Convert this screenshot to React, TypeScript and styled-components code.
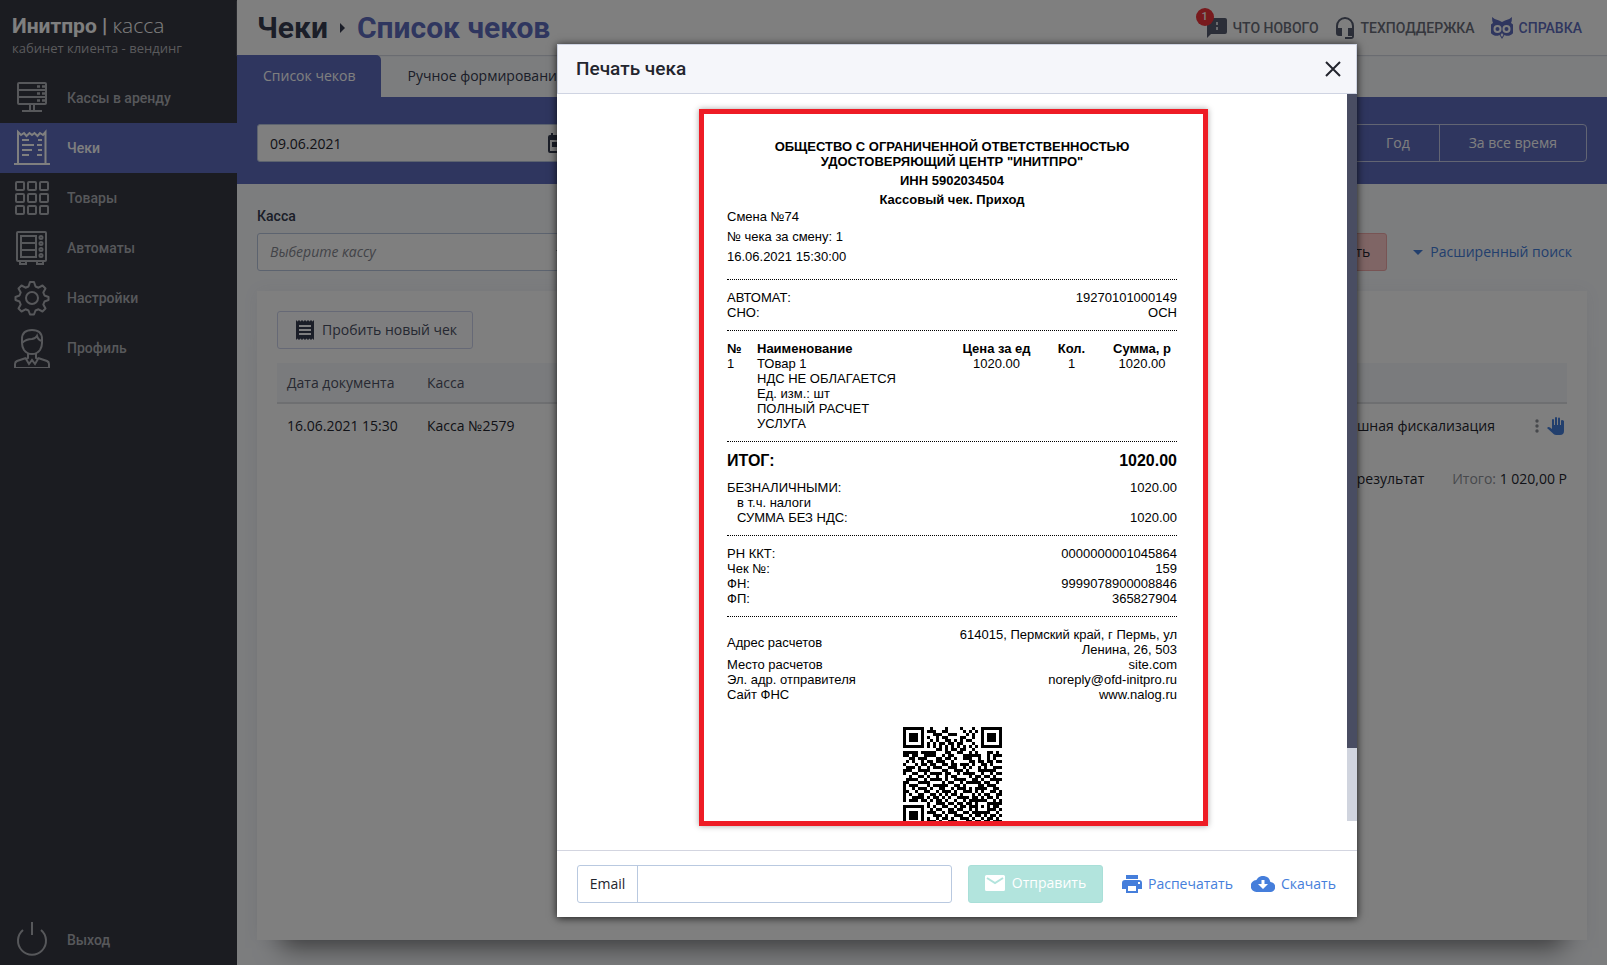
import React from "react";
import styled, { createGlobalStyle, css } from "styled-components";

const GlobalStyle = createGlobalStyle`
  *, *::before, *::after { box-sizing: border-box; }
  body { margin: 0; background: #fff; font-family: "Open Sans", "Noto Sans", sans-serif; font-size: 14px; line-height: 20px; color: #23252e; }
  button, input, select { font: inherit; color: inherit; margin: 0; }
  button { cursor: pointer; }
  a { color: inherit; text-decoration: none; }
  svg { display: block; flex: none; }
  h1, h2, p { margin: 0; }
  table { border-collapse: collapse; border-spacing: 0; }
`;

/* ---------- shell ---------- */

const Page = styled.div`
  min-height: 100vh;
  padding: 0 4px 5px 0;
  display: flex;
`;

const Shell = styled.div`
  position: relative;
  flex: 1;
  min-width: 0;
  display: flex;
  background: #f8fafd;
  overflow: hidden;
`;

const Sidebar = styled.aside`
  flex: none;
  width: 237px;
  background: #363842;
  color: #fff;
  display: flex;
  flex-direction: column;
`;

const Brand = styled.div`
  height: 73px;
  padding: 13px 12px 0;
`;

const BrandName = styled.div`
  font: 700 21px/24px Roboto, sans-serif;
  white-space: nowrap;
  span { font-family: "Open Sans", sans-serif; font-weight: 300; }
`;

const BrandNote = styled.div`
  font-size: 13px;
  line-height: 20px;
  color: #b4b5b9;
`;

const Nav = styled.nav`
  flex: 1;
  display: flex;
  flex-direction: column;
`;

const NavLink = styled.a<{ $active?: boolean; $last?: boolean }>`
  height: 50px;
  padding-left: 14px;
  display: flex;
  align-items: center;
  gap: 17px;
  font: 500 14px/20px Roboto, sans-serif;
  color: ${(p) => (p.$active ? "#fff" : "#aeb0b6")};
  background: ${(p) => (p.$active ? "#5e6cbe" : "transparent")};
  ${(p) => p.$last && css`margin-top: auto;`}
`;

const Main = styled.main`
  flex: 1;
  min-width: 0;
  display: flex;
  flex-direction: column;
`;

const Header = styled.header`
  height: 55px;
  padding: 0 25px 0 20px;
  background: #fff;
  box-shadow: 0 1px 1px #d5d9e2;
  display: flex;
  align-items: center;
  justify-content: space-between;
`;

const Crumbs = styled.h1`
  display: flex;
  align-items: center;
  gap: 11px;
  font: 700 30px/36px Roboto, sans-serif;
  color: #363c50;
  a { color: #5e6cbe; }
`;

const HelpLinks = styled.div`
  display: flex;
  align-items: center;
  gap: 16px;
`;

const HelpLink = styled.a<{ $accent?: boolean }>`
  position: relative;
  display: flex;
  align-items: center;
  gap: 6px;
  font: 500 14px/20px Roboto, sans-serif;
  color: ${(p) => (p.$accent ? "#5e6cbe" : "#6b6e7a")};
`;

const Badge = styled.span`
  position: absolute;
  left: -11px;
  top: -10px;
  width: 18px;
  height: 18px;
  border-radius: 9px;
  background: #f0343a;
  color: #fff;
  font: 500 11px/18px Roboto, sans-serif;
  text-align: center;
`;

const Tabs = styled.div`
  height: 42px;
  display: flex;
`;

const Tab = styled.button<{ $active?: boolean }>`
  border: 0;
  padding: 0 26px;
  background: ${(p) => (p.$active ? "#5e6cbe" : "transparent")};
  color: ${(p) => (p.$active ? "#fff" : "#363c50")};
  border-radius: 0 5px 0 0;
  white-space: nowrap;
`;

const PeriodBar = styled.div`
  padding: 27px 20px 22px;
  background: #5e6cbe;
  display: flex;
  justify-content: space-between;
`;

const FieldBox = styled.div`
  width: 320px;
  height: 38px;
  padding: 0 10px 0 12px;
  background: #fff;
  border: 1px solid #b9c6de;
  border-radius: 3px;
  display: flex;
  align-items: center;
  input, select {
    flex: 1;
    min-width: 0;
    height: 36px;
    border: 0;
    padding: 0;
    background: transparent;
    outline: 0;
  }
  select { appearance: none; font-style: italic; color: #858790; }
`;

const Segments = styled.div`
  display: flex;
  border: 1px solid #c5cae6;
  border-radius: 4px;
  color: #fff;
`;

const Segment = styled.button`
  height: 36px;
  padding: 0 29px;
  border: 0;
  border-left: 1px solid #c5cae6;
  background: transparent;
  &:first-child { border-left: 0; }
`;

const Filters = styled.div`
  padding: 22px 20px 20px;
  display: flex;
  align-items: flex-end;
  justify-content: space-between;
  label { display: block; font: 500 14px/20px Roboto, sans-serif; margin-bottom: 7px; color: #363c50; }
`;

const FilterActions = styled.div`
  display: flex;
  align-items: center;
  gap: 26px;
  padding-right: 15px;
`;

const ClearButton = styled.button`
  height: 38px;
  padding: 0 16px;
  border: 1px solid #f0a9a9;
  border-radius: 3px;
  background: #ffcbcb;
`;

const AdvancedLink = styled.a`
  display: flex;
  align-items: center;
  gap: 7px;
  color: #457edb;
`;

const Card = styled.section`
  flex: 1;
  margin: 0 20px 25px;
  padding: 20px;
  background: #fff;
  box-shadow: 0 0 16px rgba(60, 70, 110, 0.06), 0 32px 24px -24px rgba(0, 0, 0, 0.5);
`;

const NewButton = styled.button`
  height: 38px;
  padding: 0 15px 0 18px;
  display: flex;
  align-items: center;
  gap: 8px;
  border: 1px solid #cdd3ec;
  border-radius: 3px;
  background: #fdfdff;
  color: #4b5063;
`;

const ListTable = styled.table`
  width: 100%;
  margin-top: 14px;
  table-layout: fixed;
  th, td { padding: 0 10px; text-align: left; font-weight: 400; white-space: nowrap; }
  th { height: 40px; background: #f5f7fb; color: #4f5264; border-bottom: 2px solid #dcdee2; }
  td { height: 45px; }
  th:nth-child(1), th:nth-child(2) { width: 140px; }
  th:nth-child(4) { width: 190px; }
  th:nth-child(5) { width: 62px; }
  td:last-child { padding: 0 2px 0 30px; }
`;

const RowActions = styled.div`
  display: flex;
  align-items: center;
  justify-content: flex-end;
  gap: 8px;
`;

const Totals = styled.div`
  margin-top: 21px;
  display: flex;
  justify-content: flex-end;
  gap: 28px;
  span { color: #8f9299; }
`;

/* ---------- dialog ---------- */

const Overlay = styled.div`
  position: absolute;
  inset: 0;
  padding: 44px 250px 48px 0;
  background: rgba(0, 0, 0, 0.5);
  display: flex;
  justify-content: flex-end;
`;

const Dialog = styled.section`
  width: 800px;
  background: #fff;
  border: 0;
  box-shadow: 0 1px 8px rgba(0, 0, 0, 0.8);
  display: flex;
  flex-direction: column;
`;

const DialogHead = styled.header`
  height: 50px;
  padding: 0 15px 0 18px;
  background: #f5f6fa;
  border: 1px solid #cfd4e2;
  display: flex;
  align-items: center;
  justify-content: space-between;
  h2 { font: 500 19px/24px Roboto, sans-serif; color: #23252e; }
`;

const CloseButton = styled.button`
  padding: 0;
  border: 0;
  background: transparent;
`;

const DialogBody = styled.div`
  flex: 1;
  min-height: 0;
  display: flex;
`;

const ScrollArea = styled.div`
  flex: 1;
  padding: 15px 0 24px 3px;
  display: flex;
  justify-content: center;
`;

const ScrollTrack = styled.div`
  width: 10px;
  margin-bottom: 29px;
  background: #d0d4de;
`;

const ScrollThumb = styled.div`
  height: 90%;
  background: #494d62;
`;

const DialogFoot = styled.footer`
  height: 67px;
  padding: 0 20px;
  border-top: 1px solid #d3d5e0;
  display: flex;
  align-items: center;
  white-space: nowrap;
`;

const EmailGroup = styled.div`
  flex: none;
  width: 375px;
  height: 38px;
  border: 1px solid #b9c9e0;
  border-radius: 3px;
  display: flex;
  label { width: 60px; border-right: 1px solid #b9c9e0; line-height: 36px; text-align: center; }
  input { flex: 1; min-width: 0; border: 0; padding: 0 12px; background: transparent; outline: 0; }
`;

const SendButton = styled.button`
  flex: none;
  width: 135px;
  height: 38px;
  margin: 0 19px 0 16px;
  padding: 0 0 2px;
  border: 1px solid #a9dfd8;
  border-radius: 3px;
  background: #b2e4dd;
  color: #fff;
  display: flex;
  align-items: center;
  justify-content: center;
  gap: 7px;
`;

const FootLink = styled.a`
  display: flex;
  align-items: center;
  gap: 6px;
  margin-right: 18px;
  color: #457edb;
  &:last-child { margin-right: 0; }
`;

/* ---------- receipt ---------- */

const Paper = styled.article`
  width: 509px;
  padding: 25px 26px 0 23px;
  border: 5px solid #ee1c25;
  box-shadow: 0 0 6px rgba(0, 0, 0, 0.35);
  background: #fff;
  overflow: hidden;
  color: #000;
  font: 13px/15px "Liberation Sans", Arial, sans-serif;
`;

const Seller = styled.div`
  text-align: center;
  font-weight: 700;
  display: flex;
  flex-direction: column;
  gap: 4px;
  margin-bottom: 2px;
`;

const Shift = styled.div`
  display: flex;
  flex-direction: column;
  gap: 5px;
  margin-bottom: 15px;
`;

const Rule = styled.div`
  margin: 10px 0;
  border-top: 1px dotted #000;
`;

const Pairs = styled.table`
  width: 100%;
  th { padding: 0; font-weight: 400; text-align: left; }
  td { padding: 0; text-align: right; }
`;

const IndentedHead = styled.th`
  && { padding-left: 10px; }
`;

const Address = styled.span`
  display: inline-block;
  width: 220px;
  vertical-align: top;
`;

const Items = styled.table`
  width: 100%;
  table-layout: fixed;
  th, td { padding: 0; text-align: center; vertical-align: top; }
  th:nth-child(1) { width: 30px; }
  th:nth-child(3) { width: 79px; }
  th:nth-child(4) { width: 71px; }
  th:nth-child(5) { width: 70px; }
  th:nth-child(-n + 2), td:nth-child(-n + 2) { text-align: left; }
`;

const Total = styled.div`
  margin-bottom: 10px;
  display: flex;
  justify-content: space-between;
  font-size: 16px;
  line-height: 18px;
  font-weight: 700;
`;

const Code = styled.div`
  margin-top: 25px;
  display: flex;
  justify-content: center;
`;

/* ---------- drawings ---------- */

const Line = ({ children }: { children: React.ReactNode }) => (
  <svg width="36" height="40" viewBox="0 0 36 40" fill="none" stroke="currentColor" strokeWidth="2">
    {children}
  </svg>
);

const RackIcon = () => (
  <Line>
    <rect x="4" y="5" width="28" height="21" rx="1" />
    <path d="M4 12h28M4 19h28M16 26v7M20 26v7M8 33h20" />
    <path d="M23 8.500h3M28 8.500h3M23 15.500h3M28 15.500h3M23 22.500h3M28 22.500h3" strokeWidth="2.500" />
  </Line>
);
const ReceiptIcon = () => (
  <Line>
    <path d="M0 36h36M4 36V4l3 3 3-2 2.500 3 3-3 2.500 2 2.500-2 3 3 2.500-3 3 2 2.500-3v32" />
    <path d="M8 12h7M8 17h12M8 22h10M8 27h7M24 12h4M23 17h5M24 22h4M23 27h5" />
  </Line>
);
const GridIcon = () => (
  <Line>
    {[3, 15, 27].map((y) =>
      [2, 14, 26].map((x) => <rect key={`${x}-${y}`} x={x} y={y + 1} width="8" height="8" rx="1" />)
    )}
  </Line>
);
const VendingIcon = () => (
  <Line>
    <rect x="3" y="4" width="29" height="29" rx="1" />
    <path d="M7 8h15v21H7zM7 15h15M7 22h15M6 33v3h6v-3M23 33v3h6v-3" />
    {[9.5, 15.5, 21.5, 27.5].map((y) => <circle key={y} cx="27" cy={y} r="1.500" />)}
  </Line>
);
const GearIcon = () => (
  <Line>
    <circle cx="18" cy="20" r="6" />
    <path strokeLinejoin="round" d="M16 4h4l1.500 4.500 3 1.200 4-2.200 3 3-2.200 4 1.200 3 4 1.500v3l-4 1.500-1.200 3 2.200 4-3 3-4-2.200-3 1.200-1.500 4h-4l-1.500-4-3-1.200-4 2.200-3-3 2.200-4-1.200-3-4-1.500v-3l4-1.500 1.200-3-2.200-4 3-3 4 2.200 3-1.200z" />
  </Line>
);
const PersonIcon = () => (
  <Line>
    <path d="M8 11q0-9 10-9t10 9v4q0 4-2 7-3 4-8 4t-8-4q-2-3-2-7zM8 15q4-4 10-4 4-1 5-3 1 4 5 5" />
    <path d="M14 25v5l-2 1 3 5 3-4 3 4 3-5-2-1v-5M12 30l-9 3q-2 1-2 3v4h34v-4q0-2-2-3l-9-3" />
  </Line>
);
const PowerIcon = () => (
  <Line>
    <path d="M18 2v13M9 10a14 14 0 1 0 18 0" />
  </Line>
);

const FeedbackIcon = () => (
  <svg width="20" height="20" viewBox="0 0 20 20" fill="#565d70">
    <path d="M2 0h16a2 2 0 0 1 2 2v12a2 2 0 0 1-2 2H4l-4 4V2a2 2 0 0 1 2-2z" />
    <path d="M9 4h2v3H9zM9 9h2v3H9z" fill="#d4d6dd" />
  </svg>
);
const HeadsetIcon = () => (
  <svg width="20" height="22" viewBox="0 0 20 22" fill="#565d70">
    <path d="M10 0a9 9 0 0 0-9 9v7a3 3 0 0 0 3 3h3v-8H3V9a7 7 0 0 1 14 0v2h-4v8h4v1h-7v2h6a3 3 0 0 0 3-3V9a9 9 0 0 0-9-9z" />
  </svg>
);
const OwlIcon = () => (
  <svg width="22" height="22" viewBox="0 0 22 22" fill="#5e6cbe">
    <path d="M1 0q3 3 7 3.500l3 1.500 3-1.500Q18 3 21 0q0 4-1 6a6 6 0 0 1-6.500 12L11 22l-2.500-4A6 6 0 0 1 2 6Q1 4 1 0z" />
    <circle cx="6.500" cy="12" r="4" fill="#fff" />
    <circle cx="15.500" cy="12" r="4" fill="#fff" />
    <circle cx="6.500" cy="12" r="2" />
    <circle cx="15.500" cy="12" r="2" />
    <path d="M11 16l1.500 2-1.500 2-1.500-2z" fill="#fff" />
  </svg>
);
const Caret = ({ color }: { color: string }) => (
  <svg width="10" height="5" viewBox="0 0 10 5" fill={color}><path d="M0 0h10L5 5z" /></svg>
);
const CrumbArrow = () => (
  <svg width="7" height="10" viewBox="0 0 7 10" fill="#363c50"><path d="M1 0l5 5-5 5z" /></svg>
);
const CalendarIcon = () => (
  <svg width="18" height="20" viewBox="0 0 18 20" fill="#363c50">
    <path fillRule="evenodd" d="M3 0h2v2h8V0h2v2h1a2 2 0 0 1 2 2v14a2 2 0 0 1-2 2H2a2 2 0 0 1-2-2V4a2 2 0 0 1 2-2h1zM2 7v11h14V7zM4 9h5v5H4z" />
  </svg>
);
const SlipIcon = () => (
  <svg width="18" height="20" viewBox="0 0 18 20" fill="#363c50">
    <path fillRule="evenodd" d="M0 0l1.500 1.500L3 0l1.500 1.500L6 0l1.500 1.500L9 0l1.500 1.500L12 0l1.500 1.500L15 0l1.500 1.500L18 0v20l-1.500-1.500L15 20l-1.500-1.500L12 20l-1.500-1.500L9 20l-1.500-1.500L6 20l-1.500-1.500L3 20l-1.500-1.500L0 20zM3 5v2h12V5zM3 9v2h12V9zM3 13v2h12v-2z" />
  </svg>
);
const DotsIcon = () => (
  <svg width="4" height="14" viewBox="0 0 4 14" fill="#8f9299">
    <circle cx="2" cy="2" r="1.700" /><circle cx="2" cy="7" r="1.700" /><circle cx="2" cy="12" r="1.700" />
  </svg>
);
const HandIcon = () => (
  <svg width="18" height="18" viewBox="0 0 18 18" fill="#457edb">
    <path d="M17 4v10a4 4 0 0 1-4 4H9q-2 0-3.500-2L0 11q1.500-1.500 3-.5L5 12V3q0-1 1-1t1 1v5h1V1q0-1 1-1t1 1v7h1V1.500q0-1 1-1t1 1V8h1V4q0-1 1-1t2 1z" />
  </svg>
);
const CrossIcon = () => (
  <svg width="16" height="16" viewBox="0 0 16 16" stroke="#23252e" strokeWidth="2"><path d="M1 1l14 14M15 1L1 15" /></svg>
);
const MailIcon = () => (
  <svg width="20" height="16" viewBox="0 0 20 16" fill="#fff">
    <path d="M1.500 0h17A1.500 1.500 0 0 1 20 1.500v13a1.500 1.500 0 0 1-1.500 1.500h-17A1.500 1.500 0 0 1 0 14.500v-13A1.500 1.500 0 0 1 1.500 0z" />
    <path d="M2 3l8 5 8-5" fill="none" stroke="#b2e4dd" strokeWidth="2" />
  </svg>
);
const PrinterIcon = () => (
  <svg width="20" height="18" viewBox="0 0 20 18" fill="#457edb">
    <path fillRule="evenodd" d="M4 0h12v4H4zM3 5h14a3 3 0 0 1 3 3v6h-4v4H4v-4H0V8a3 3 0 0 1 3-3zM6 11v5h8v-5zM16 7v2h2V7z" />
  </svg>
);
const CloudIcon = () => (
  <svg width="24" height="16" viewBox="0 0 24 16" fill="#457edb">
    <path fillRule="evenodd" d="M19.400 6A7.500 7.500 0 0 0 5.400 4 6 6 0 0 0 6 16h13a5 5 0 0 0 .4-10zM10.500 4h3v4H17l-5 5-5-5h3.500z" />
  </svg>
);

const qrRows = [
  "111111100100001000010001000111111",
  "100000101110011000001010101000001",
  "101110100011100111000101001011101",
  "101110101001011000011001001011101",
  "101110100101001101010110001011101",
  "100000101010110110110001001000001",
  "111111101010101010101010101111111",
  "000000000001101011011001000000000",
  "111110111110001100110010100011010",
  "110110011110010110001111110010111",
  "001101110001101101001110010010100",
  "010100101101110010000011011011011",
  "100010110110011011011101001101000",
  "011101001011100111001010010100111",
  "111001111000011001110100011111100",
  "100110010111101100101111001001011",
  "001001101001001011000010110110100",
  "011110010111101001111001101001111",
  "110001111000010110010111110110010",
  "101110001011111001101000011011100",
  "100101110100110010111010111100110",
  "110010011001011101001110101001101",
  "101001100110101011010001010110011",
  "100111101011010100111101101011010",
  "101110110101101001001011111100101",
  "000000001001110110110110100011111",
  "111111101010011001011011101010110",
  "100000100101100110110010100011101",
  "101110101110010111001101111110010",
  "101110100011101001110010110101101",
  "101110101001011010011101001011010",
  "100000101110100111000110110110111",
  "111111101011011010110101001001100",
];

const qrPath = qrRows
  .map((row, y) => [...row].map((c, x) => (c === "1" ? `M${x} ${y}h1v1h-1z` : "")).join(""))
  .join("");

const QrCode = () => (
  <svg width="99" height="99" viewBox="0 0 33 33" shapeRendering="crispEdges" role="img" aria-label="QR-код чека">
    <path d={qrPath} />
    <path d="M26 0h1v7h-1z" />
  </svg>
);

/* ---------- page ---------- */

const navItems = [
  { title: "Кассы в аренду", icon: <RackIcon /> },
  { title: "Чеки", icon: <ReceiptIcon />, active: true },
  { title: "Товары", icon: <GridIcon /> },
  { title: "Автоматы", icon: <VendingIcon /> },
  { title: "Настройки", icon: <GearIcon /> },
  { title: "Профиль", icon: <PersonIcon /> },
];

const PairTable = ({ rows }: { rows: [string, React.ReactNode, boolean?][] }) => (
  <Pairs>
    <tbody>
      {rows.map(([name, value, indented]) => (
        <tr key={name}>
          {indented ? <IndentedHead scope="row">{name}</IndentedHead> : <th scope="row">{name}</th>}
          <td>{value}</td>
        </tr>
      ))}
    </tbody>
  </Pairs>
);

const Receipt = () => (
  <Paper>
    <Seller>
      <p>ОБЩЕСТВО С ОГРАНИЧЕННОЙ ОТВЕТСТВЕННОСТЬЮ<br />УДОСТОВЕРЯЮЩИЙ ЦЕНТР "ИНИТПРО"</p>
      <p>ИНН 5902034504</p>
      <p>Кассовый чек. Приход</p>
    </Seller>
    <Shift>
      <p>Смена №74</p>
      <p>№ чека за смену: 1</p>
      <p>16.06.2021 15:30:00</p>
    </Shift>
    <Rule />
    <PairTable rows={[["АВТОМАТ:", "19270101000149"], ["СНО:", "ОСН"]]} />
    <Rule />
    <Items>
      <thead>
        <tr><th>№</th><th>Наименование</th><th>Цена за ед</th><th>Кол.</th><th>Сумма, р</th></tr>
      </thead>
      <tbody>
        <tr>
          <td>1</td>
          <td>ТОвар 1<br />НДС НЕ ОБЛАГАЕТСЯ<br />Ед. изм.: шт<br />ПОЛНЫЙ РАСЧЕТ<br />УСЛУГА</td>
          <td>1020.00</td>
          <td>1</td>
          <td>1020.00</td>
        </tr>
      </tbody>
    </Items>
    <Rule />
    <Total><span>ИТОГ:</span><span>1020.00</span></Total>
    <PairTable rows={[["БЕЗНАЛИЧНЫМИ:", "1020.00"], ["в т.ч. налоги", "", true], ["СУММА БЕЗ НДС:", "1020.00", true]]} />
    <Rule />
    <PairTable rows={[["РН ККТ:", "0000000001045864"], ["Чек №:", "159"], ["ФН:", "9999078900008846"], ["ФП:", "365827904"]]} />
    <Rule />
    <PairTable
      rows={[
        ["Адрес расчетов", <Address>614015, Пермский край, г Пермь, ул Ленина, 26, 503</Address>],
        ["Место расчетов", "site.com"],
        ["Эл. адр. отправителя", "noreply@ofd-initpro.ru"],
        ["Сайт ФНС", "www.nalog.ru"],
      ]}
    />
    <Code><QrCode /></Code>
  </Paper>
);

const PrintDialog = () => (
  <Overlay>
    <Dialog role="dialog" aria-labelledby="print-title">
      <DialogHead>
        <h2 id="print-title">Печать чека</h2>
        <CloseButton type="button" aria-label="Закрыть"><CrossIcon /></CloseButton>
      </DialogHead>
      <DialogBody>
        <ScrollArea><Receipt /></ScrollArea>
        <ScrollTrack><ScrollThumb /></ScrollTrack>
      </DialogBody>
      <DialogFoot>
        <EmailGroup>
          <label htmlFor="email">Email</label>
          <input id="email" type="email" />
        </EmailGroup>
        <SendButton type="button"><MailIcon />Отправить</SendButton>
        <FootLink href="#print"><PrinterIcon />Распечатать</FootLink>
        <FootLink href="#download"><CloudIcon />Скачать</FootLink>
      </DialogFoot>
    </Dialog>
  </Overlay>
);

export default function App() {
  return (
    <Page>
      <GlobalStyle />
      <Shell>
        <Sidebar>
          <Brand>
            <BrandName>Инитпро | <span>касса</span></BrandName>
            <BrandNote>кабинет клиента - вендинг</BrandNote>
          </Brand>
          <Nav>
            {navItems.map((item) => (
              <NavLink key={item.title} href="#" $active={item.active}>{item.icon}{item.title}</NavLink>
            ))}
            <NavLink href="#" $last><PowerIcon />Выход</NavLink>
          </Nav>
        </Sidebar>
        <Main>
          <Header>
            <Crumbs>Чеки <CrumbArrow /> <a href="#">Список чеков</a></Crumbs>
            <HelpLinks>
              <HelpLink href="#"><FeedbackIcon />ЧТО НОВОГО<Badge>1</Badge></HelpLink>
              <HelpLink href="#"><HeadsetIcon />ТЕХПОДДЕРЖКА</HelpLink>
              <HelpLink href="#" $accent><OwlIcon />СПРАВКА</HelpLink>
            </HelpLinks>
          </Header>
          <Tabs>
            <Tab type="button" $active>Список чеков</Tab>
            <Tab type="button">Ручное формирование</Tab>
          </Tabs>
          <PeriodBar>
            <FieldBox>
              <input aria-label="Дата" defaultValue="09.06.2021" />
              <CalendarIcon />
            </FieldBox>
            <Segments>
              <Segment type="button">Месяц</Segment>
              <Segment type="button">Год</Segment>
              <Segment type="button">За все время</Segment>
            </Segments>
          </PeriodBar>
          <Filters>
            <div>
              <label htmlFor="kassa">Касса</label>
              <FieldBox>
                <select id="kassa"><option>Выберите кассу</option></select>
                <Caret color="#23252e" />
              </FieldBox>
            </div>
            <FilterActions>
              <ClearButton type="button">Очистить</ClearButton>
              <AdvancedLink href="#"><Caret color="#457edb" />Расширенный поиск</AdvancedLink>
            </FilterActions>
          </Filters>
          <Card>
            <NewButton type="button"><SlipIcon />Пробить новый чек</NewButton>
            <ListTable>
              <thead>
                <tr><th>Дата документа</th><th>Касса</th><th /><th /><th /></tr>
              </thead>
              <tbody>
                <tr>
                  <td>16.06.2021 15:30</td>
                  <td>Касса №2579</td>
                  <td />
                  <td>Успешная фискализация</td>
                  <td><RowActions><DotsIcon /><HandIcon /></RowActions></td>
                </tr>
              </tbody>
            </ListTable>
            <Totals>
              <p>Найден 1 результат</p>
              <p><span>Итого:</span> 1 020,00 Р</p>
            </Totals>
          </Card>
        </Main>
        <PrintDialog />
      </Shell>
    </Page>
  );
}
